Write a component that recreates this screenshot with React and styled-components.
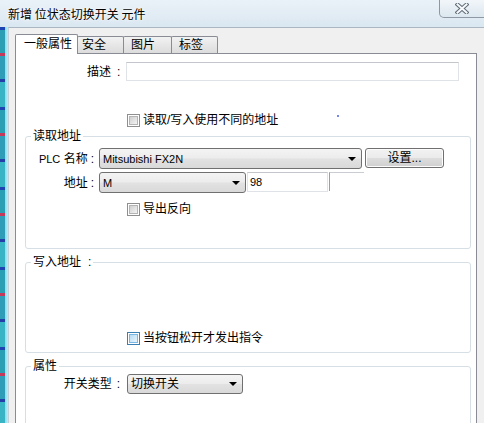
import React from 'react'
import styled, { createGlobalStyle } from 'styled-components'

const GlobalStyle = createGlobalStyle`
  html, body {
    margin: 0;
    padding: 0;
    background: #f0f0f0;
  }
  body {
    font-family: "Liberation Sans", "Noto Sans CJK SC", sans-serif;
    font-size: 12px;
    color: #000;
  }
  * { box-sizing: border-box; }
`

const Window = styled.div`
  width: 484px;
  height: 423px;
  overflow: hidden;
  display: flex;
  flex-direction: column;
  background: #f0f0f0;
`

const TitleBar = styled.div`
  flex: none;
  height: 27px;
  display: flex;
  align-items: flex-start;
  background: linear-gradient(to bottom, #eaf2f8 0%, #e2ecf4 55%, #d9e7f1 100%);
`

const Title = styled.div`
  padding: 6px 0 0 8px;
  font-family: "Noto Sans CJK SC", sans-serif;
  font-size: 12px;
  line-height: 16px;
  white-space: pre;
  text-shadow: 0 0 5px #fff, 0 0 2px #fff;
`

const CloseButton = styled.div`
  margin-left: auto;
  margin-right: -1px;
  margin-top: -1px;
  width: 46px;
  height: 19px;
  border: 1px solid #8c99a5;
  border-top: none;
  border-radius: 0 0 0 5px;
  background: linear-gradient(to bottom, #f3f7fa, #dce7ef);
  display: flex;
  align-items: center;
  justify-content: center;
`

const Frame = styled.div`
  flex: 1;
  min-height: 0;
  display: flex;
`

const LeftGlass = styled.div`
  flex: none;
  width: 8px;
  background:
    linear-gradient(to right, transparent 5px, #84e0ee 5px, #b9eff7 8px),
    repeating-linear-gradient(to bottom, #1e44b4 0 3px, #2a9fb3 3px 26px, #c43a5c 26px 29px, #2f9db8 29px 52px, #233fa8 52px 55px, #39b4c4 55px 80px);
`

const Body = styled.div`
  flex: 1;
  min-width: 0;
  display: flex;
  flex-direction: column;
  padding: 6px 7px 0 6px;
  border-top: 1px solid #aab6c2;
  border-left: 1px solid #c6d0d9;
  background: #f0f0f0;
`

const TabBar = styled.div`
  flex: none;
  height: 19px;
  display: flex;
  align-items: flex-end;
  position: relative;
  z-index: 1;
`

const Tab = styled.div`
  width: ${p => p.$w}px;
  height: ${p => (p.$active ? 20 : 17)}px;
  margin-bottom: ${p => (p.$active ? -1 : 0)}px;
  margin-left: ${p => (p.$active ? 0 : -1)}px;
  padding: ${p => (p.$active ? '2px' : '1px')} 0 0 ${p => p.$pad}px;
  border: 1px solid #898c95;
  border-bottom: none;
  border-radius: 2px 2px 0 0;
  background: ${p => (p.$active ? '#fff' : 'linear-gradient(to bottom, #f2f2f2, #dcdcdc)')};
  font-size: 12px;
  line-height: 14px;
  white-space: nowrap;
  position: relative;
  z-index: ${p => (p.$active ? 2 : 1)};
`

const TabPage = styled.div`
  flex: 1;
  min-height: 0;
  display: flex;
  flex-direction: column;
  background: #fff;
  border: 1px solid #898c95;
  border-bottom: none;
  position: relative;
`

const Row = styled.div`
  display: flex;
  align-items: flex-start;
  margin-top: ${p => p.$top || 0}px;
  padding-left: ${p => p.$left || 0}px;
`

const FieldLabel = styled.div`
  flex: none;
  width: ${p => p.$width}px;
  height: ${p => p.$h || 21}px;
  padding-right: ${p => p.$pad}px;
  display: flex;
  align-items: center;
  justify-content: ${p => (p.$start ? 'flex-start' : 'flex-end')};
  white-space: nowrap;
  line-height: 14px;
`

const Colon = styled.span`
  margin-left: ${p => p.$gap}px;
`

const Latin = styled.span`
  font-family: "Liberation Sans", sans-serif;
  font-size: 11px;
`

const TextBox = styled.div`
  flex: none;
  width: ${p => p.$w}px;
  height: ${p => p.$h}px;
  margin-left: ${p => p.$ml || 0}px;
  border: 1px solid #dfe3e8;
  border-top-color: #c3c7cc;
  background: #fff;
  padding-left: 2px;
  display: flex;
  align-items: center;
  font-family: "Liberation Sans", sans-serif;
  font-size: 11px;
`

const StubBox = styled.div`
  flex: none;
  width: ${p => p.$w}px;
  height: 19px;
  margin-left: 1px;
  border-top: 1px solid #c9ccd1;
  border-left: 1px solid #9a9da3;
`

const Select = styled.div`
  flex: none;
  width: ${p => p.$w}px;
  height: ${p => p.$h || 21}px;
  border: 1px solid #707070;
  border-radius: 3px;
  background: linear-gradient(to bottom, #f4f4f4 0%, #ececec 48%, #e2e2e2 52%, #d9d9d9 100%);
  display: flex;
  align-items: center;
  padding: 0 5px 0 3px;
  white-space: nowrap;
  line-height: 14px;
  font-size: ${p => (p.$latin ? 11 : 12)}px;
`

const SelectText = styled.span`
  flex: 1;
`

const Arrow = styled.span`
  width: 0;
  height: 0;
  border-left: 4px solid transparent;
  border-right: 4px solid transparent;
  border-top: 4px solid #000;
`

const Button = styled.div`
  flex: none;
  width: ${p => p.$w}px;
  height: 20px;
  margin-left: ${p => p.$ml || 0}px;
  border: 1px solid #707070;
  border-radius: 3px;
  background: linear-gradient(to bottom, #f2f2f2 0%, #ebebeb 48%, #dddddd 52%, #cfcfcf 100%);
  box-shadow: inset 0 0 0 1px #fcfcfc;
  display: flex;
  align-items: center;
  justify-content: center;
  line-height: 14px;
`

const CheckRow = styled.div`
  display: flex;
  align-items: center;
  height: 13px;
  gap: 3px;
  margin-top: ${p => p.$top || 0}px;
  padding-left: ${p => p.$left}px;
  line-height: 13px;
  white-space: nowrap;
`

const CheckBox = styled.span`
  flex: none;
  width: 13px;
  height: 13px;
  border: 1px solid ${p => (p.$hot ? '#3c7fb1' : '#8e8f8f')};
  background: #fff;
  padding: 1px;
  display: flex;

  &::after {
    content: '';
    flex: 1;
    border: 1px solid ${p => (p.$hot ? '#79b7e4' : '#b4b4b4')};
    background: ${p => (p.$hot
      ? 'linear-gradient(135deg, #b7dcf5, #e8f5fd)'
      : 'linear-gradient(135deg, #cfcfcf, #f4f4f4)')};
  }
`

const Group = styled.fieldset`
  margin: ${p => p.$top}px 5px 0 9px;
  padding: 0;
  min-width: 0;
  border: 1px solid #d5dfe5;
  border-radius: 3px;
`

const Legend = styled.legend`
  margin-left: 5px;
  padding: 0 2px;
  line-height: 14px;
  white-space: nowrap;
`

const GroupBody = styled.div`
  padding: ${p => p.$pt}px 0 ${p => p.$pb}px 0;
`

const Speck = styled.span`
  position: absolute;
  left: 321px;
  top: 61px;
  width: 2px;
  height: 2px;
  background: #5668e0;
  opacity: 0.8;
`

const tabs = [
  { label: '一般属性', w: 63, pad: 8, active: true },
  { label: '安全', w: 47, pad: 4 },
  { label: '图片', w: 49, pad: 7 },
  { label: '标签', w: 47, pad: 7 },
]

function CloseIcon() {
  return (
    <svg width="14" height="11" viewBox="0 0 14 11">
      <path d="M2.5 1.5 L11.5 9.5 M11.5 1.5 L2.5 9.5" stroke="#5f6b77" strokeWidth="4" strokeLinecap="square" fill="none" />
      <path d="M2.5 1.5 L11.5 9.5 M11.5 1.5 L2.5 9.5" stroke="#f7f9fb" strokeWidth="2" strokeLinecap="square" fill="none" />
    </svg>
  )
}

export default function App() {
  return (
    <Window>
      <GlobalStyle />
      <TitleBar>
        <Title>新增 位状态切换开关 元件</Title>
        <CloseButton><CloseIcon /></CloseButton>
      </TitleBar>
      <Frame>
        <LeftGlass />
        <Body>
          <TabBar>
            {tabs.map(t => (
              <Tab key={t.label} $w={t.w} $pad={t.pad} $active={t.active}>{t.label}</Tab>
            ))}
          </TabBar>
          <TabPage>
            <Speck />
            <Row $top={8} $left={71}>
              <FieldLabel $width={39} $pad={6} $h={19} $start>
                描述<Colon $gap={6}>:</Colon>
              </FieldLabel>
              <TextBox $w={333} $h={19} />
            </Row>

            <CheckRow $top={33} $left={111}>
              <CheckBox />
              读取/写入使用不同的地址
            </CheckRow>

            <Group $top={2}>
              <Legend>读取地址</Legend>
              <GroupBody $pt={5} $pb={32}>
                <Row>
                  <FieldLabel $width={73} $pad={5}>
                    <Latin>PLC</Latin>&nbsp;名称<Colon $gap={3}>:</Colon>
                  </FieldLabel>
                  <Select $w={263} $latin>
                    <SelectText>Mitsubishi FX2N</SelectText>
                    <Arrow />
                  </Select>
                  <Button $w={79} $ml={3}>设置...</Button>
                </Row>
                <Row $top={3}>
                  <FieldLabel $width={73} $pad={5}>
                    地址<Colon $gap={3}>:</Colon>
                  </FieldLabel>
                  <Select $w={147} $latin>
                    <SelectText>M</SelectText>
                    <Arrow />
                  </Select>
                  <TextBox $w={81} $h={20} $ml={1}>98</TextBox>
                  <StubBox $w={35} />
                </Row>
                <CheckRow $top={10} $left={101}>
                  <CheckBox />
                  导出反向
                </CheckRow>
              </GroupBody>
            </Group>

            <Group $top={6}>
              <Legend>写入地址<Colon $gap={7}>:</Colon></Legend>
              <GroupBody $pt={63} $pb={7}>
                <CheckRow $left={101}>
                  <CheckBox $hot />
                  当按钮松开才发出指令
                </CheckRow>
              </GroupBody>
            </Group>

            <Group $top={6}>
              <Legend>属性</Legend>
              <GroupBody $pt={1} $pb={60}>
                <Row>
                  <FieldLabel $width={101} $pad={7} $h={20}>
                    开关类型<Colon $gap={5}>:</Colon>
                  </FieldLabel>
                  <Select $w={116} $h={20}>
                    <SelectText>切换开关</SelectText>
                    <Arrow />
                  </Select>
                </Row>
              </GroupBody>
            </Group>
          </TabPage>
        </Body>
      </Frame>
    </Window>
  )
}
